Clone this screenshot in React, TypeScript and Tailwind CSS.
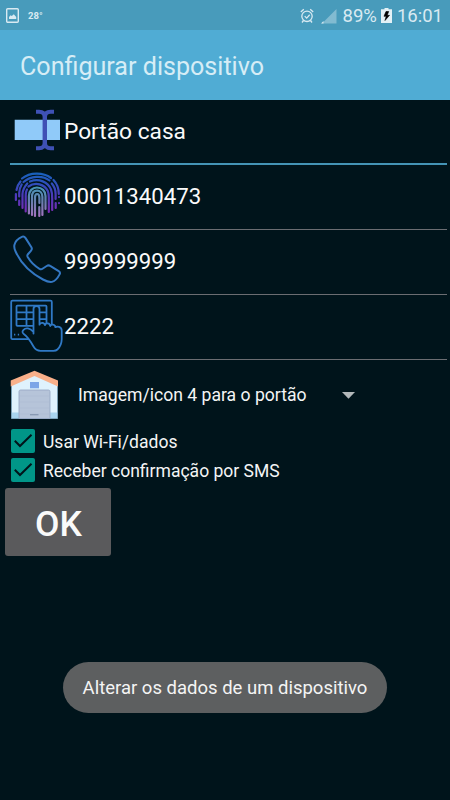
import { useState } from "react";

const RenameIcon = () => (
  <svg className="h-[65px] w-[54px] shrink-0" viewBox="0 0 54 65" fill="none">
    <path d="M4.7 19.7H50V40H4.7z" fill="#90caf9" />
    <path
      d="M26 11.800h3c3.800 0 5.600 2 5.600 5.200v26c0 3.200-1.800 5.200-5.600 5.200H26M44 11.800h-3.400c-3.800 0-5.600 2-5.600 5.200v26c0 3.200 1.800 5.200 5.600 5.200H44"
      stroke="#3f51b5"
      strokeWidth="4"
    />
  </svg>
);

const FingerprintIcon = () => (
  <svg className="h-[65px] w-[54px] shrink-0" viewBox="0 0 54 65" fill="none" strokeWidth="2.200" strokeLinecap="round">
    <defs>
      <linearGradient id="ridge" x1="0" y1="8" x2="0" y2="51" gradientUnits="userSpaceOnUse">
        <stop stopColor="#1762bd" />
        <stop offset="0.5" stopColor="#493bba" />
        <stop offset="1" stopColor="#8429b5" />
      </linearGradient>
      <linearGradient id="core" x1="0" y1="22" x2="0" y2="51" gradientUnits="userSpaceOnUse">
        <stop stopColor="#4694b5" />
        <stop offset="0.5" stopColor="#697eaf" />
        <stop offset="1" stopColor="#a273bf" />
      </linearGradient>
    </defs>
    <g stroke="url(#ridge)">
      <path d="M12 13.500C20 7 33 7 41 13M43.500 15c3.800 4 5.300 9 5.300 14M6.500 25c.6-3.500 1.800-6 4-8.500M5.900 29v6" />
      <path d="M13.500 17c7-6 19-7 26-1.500M41.800 18.500c2.600 3 3.800 6 3.800 10.500v5M9.200 31.500V28c0-3 1-6 2.500-8.500M9.200 35.500v4.500" />
      <path d="M20 16.500c9-3.500 18 .5 21 8 1.200 3 1.200 6 1.200 9V45M12.500 43V29c.2-4 2-7.300 4.800-10.500" />
      <path d="M18.500 21.500c7-5 16-2.200 19.300 4.500.9 2 1 5 1 7v14M15.700 46.500V30c0-2 .4-4 1.300-5.500" />
      <path d="M49 32v.1M45.700 38v5M49 38v.1" />
    </g>
    <g stroke="url(#core)">
      <path d="M18.900 48.500V31c0-5 3.500-8.500 8-8.500 5 0 8.600 3.500 8.600 8.500v13" />
      <path d="M22 50V32c0-4 2-6.300 5-6.300 3.300 0 5.400 2.500 5.400 6.300v18" />
      <path d="M25 51V33c0-2.600.6-4 2.100-4s2.300 1.400 2.300 4v5M29.300 42v9" />
    </g>
  </svg>
);

const PhoneIcon = () => (
  <svg className="h-[65px] w-[54px] shrink-0" viewBox="0 0 54 65" fill="none">
    <path
      d="M4.400 15c.8-3.600 4-6.700 8-8.400 1.300-.5 2.400.3 3.200 1.500l5.800 9.200c.8 1.300.6 2.300-.5 3.500l-3.200 3.700c-.6.800-.5 1.500 0 2.500 2.800 4.800 6.900 8.900 11.800 11.800 1.200.7 2 .7 3-.1l4.200-2.700c1.200-.8 2.300-.9 3.500-.1l8.500 5.200c1.300.8 1.600 2 .9 3.300-1.700 3.300-4.600 6.600-7.600 7.500-3 .7-6-.8-9-2.400C20.500 42.800 10.500 32.700 5.600 21.500 4.500 19.200 4 17 4.400 15z"
      stroke="#3377c2"
      strokeWidth="2"
    />
  </svg>
);

const KeypadIcon = () => (
  <svg className="h-[65px] w-[54px] shrink-0" viewBox="0 0 54 65" fill="none" stroke="#2f79c6" strokeWidth="1.800" strokeLinejoin="round">
    <rect x="1.200" y="5.700" width="40.600" height="38.400" rx="1.200" />
    <rect x="6.500" y="10.600" width="30" height="20.200" rx="0.800" />
    <path d="M16.500 10.600v20.200M27 10.600v20.200M6.500 17.300h30M6.500 24.100h30" />
    <path d="M4 39.700h1.300M7.800 39.700h1.300" />
    <path
      d="M23.500 38.500V14c0-4 6-4 6 0v15.700c.8-2.700 5-2.500 5.400.5.700-2.700 5-2.200 5.300.8.800-2.300 5-1.600 5.200 1.200 1.600-1.300 6.300-.5 6.300 3.500v8.500c0 4.500-2 8-4.300 10.300-.8.800-2 1.300-4 1.300H30.500c-3.200 0-5.500-1.700-7-4.300-2.500-4.500-5-9-9.700-12.500-1.600-1.300-1.800-2.600-.3-4.200 2.300-2.300 6.200-2 10 2.200z"
      fill="#00141b"
    />
  </svg>
);

const GarageIcon = () => (
  <svg className="h-[67px] w-[54px] shrink-0" viewBox="0 0 54 67">
    <path d="M1.500 24L24.500 13l23 11v34.500h-46z" fill="#dff2fd" />
    <path d="M1.500 52.500h46v6h-46z" fill="#a8d4ee" />
    <path d="M1.500 24v34.500h46V24" fill="none" stroke="#7ba3bd" strokeWidth="0.800" />
    <path d="M9 58.500V31.600c0-1 .6-1.600 1.600-1.600h27.800c1 0 1.600.6 1.600 1.600v26.900z" fill="#b6c4d9" stroke="#98a9c5" strokeWidth="0.900" />
    <path d="M10 36h29M10 42h29M10 48h29M10 54h29" stroke="#aebdd3" strokeWidth="0.600" />
    <path d="M20 54.700h8.500" stroke="#8798b3" strokeWidth="1.300" />
    <path d="M20 22h9v6.300h-9z" fill="#7ba5e7" />
    <path d="M.7 20.500L24.500 10.800 48 20.500v6L24.500 16 .7 26.500z" fill="#f9b08a" />
  </svg>
);

const Field = ({ icon: Icon, value, active }: any) => (
  <div className="relative flex h-[65px] items-center">
    <Icon />
    <input
      className={
        active
          ? "mb-[3px] h-10 min-w-0 flex-1 bg-transparent text-[22.700px] text-[#fafafa] outline-none"
          : "mb-[3px] h-10 min-w-0 flex-1 bg-transparent text-[22.200px] text-[#fafafa] outline-none"
      }
      defaultValue={value}
    />
    <span className={active ? "absolute bottom-0 left-0 h-[2px] w-full bg-[#4494b6]" : "absolute bottom-0 left-0 h-px w-full bg-[#6b6d72]"} />
  </div>
);

const CheckRow = ({ label }: { label: string }) => {
  const [checked, setChecked] = useState(true);
  return (
    <button className="flex h-[29px] items-center gap-2 text-left" onClick={() => setChecked(!checked)}>
      <svg className="mb-px size-6 shrink-0" viewBox="0 0 24 24">
        <rect width="24" height="24" rx="2" fill="#009688" />
        {checked && <path d="M3.800 11.800l5.200 5.200L20.500 5.800" fill="none" stroke="#00141b" strokeWidth="2" />}
      </svg>
      <span className="pt-[2px] text-[17.550px] text-[#f4f5f5]">{label}</span>
    </button>
  );
};

const StatusBar = () => (
  <div className="flex h-[30px] items-center bg-[#489bbb] text-[#d9eaf2]">
    <svg className="ml-[6px] mt-px h-[15px] w-[13px]" viewBox="0 0 13 15" fill="none">
      <rect x="0.700" y="0.700" width="11.600" height="13.600" rx="1" stroke="currentColor" strokeWidth="1.400" />
      <path d="M3 11V9l1.600-1.800 1.200.8 2-1.800L10.200 9v2z" fill="currentColor" />
    </svg>
    <span className="ml-[9px] pt-[3px] text-[9.500px] font-bold">28°</span>
    <div className="ml-auto flex items-center pr-[7px]">
      <svg className="mt-px h-4 w-[14px]" viewBox="0 0 14 16" fill="none" stroke="currentColor" strokeWidth="1.300">
        <circle cx="7" cy="8.300" r="5.200" />
        <path d="M.8 4l3-2.800M13.200 4l-3-2.800M3.500 12.500L2 14.500M10.500 12.500l1.500 2M4.700 8.100l2 2 3-3.300" />
      </svg>
      <svg className="ml-[7px] mt-px h-4 w-4" viewBox="0 0 16 16" fill="currentColor">
        <path d="M1 15.500L15.500 1v14.500z" opacity="0.400" />
        <path d="M0 15.500l2.500-2.500v2.500z" />
      </svg>
      <span className="ml-[6px] pt-[3px] text-[18.500px]">89%</span>
      <svg className="ml-1 mt-px h-[15px] w-[11px]" viewBox="0 0 11 15">
        <path d="M3.500 0h4v1.300H11V15H0V1.300h3.500z" fill="#e3f1f6" />
        <path d="M5 3.500L3 8.300h2.200L4 12.500l4.500-5.200H6.200l1.500-3.800z" fill="#000" stroke="#000" strokeWidth="0.600" />
      </svg>
      <span className="ml-[5px] pt-[3px] text-[18.500px]">16:01</span>
    </div>
  </div>
);

const App = () => (
  <div className="flex h-[800px] w-[450px] flex-col overflow-hidden bg-[#00141b] font-['Roboto',sans-serif]">
    <StatusBar />
    <header className="flex h-[70px] items-center bg-[#50acd4] pl-5">
      <h1 className="pt-[3px] text-[25.100px] text-[#d6edf6]">Configurar dispositivo</h1>
    </header>

    <main className="flex flex-1 flex-col">
      <div className="pr-[3px] pl-[10px]">
        <Field icon={RenameIcon} value="Portão casa" active />
        <Field icon={FingerprintIcon} value="00011340473" />
        <Field icon={PhoneIcon} value="999999999" />
        <Field icon={KeypadIcon} value="2222" />
      </div>

      <div className="flex h-[67px] items-center pl-[10px]">
        <GarageIcon />
        <div className="ml-[14px] flex w-[277px] items-center justify-between pt-1">
          <span className="text-[17.600px] text-[#f4f5f5]">Imagem/icon 4 para o portão</span>
          <svg className="h-[7px] w-[13px]" viewBox="0 0 13 7">
            <path d="M0 0h13L6.500 6.800z" fill="#b2b8ba" />
          </svg>
        </div>
      </div>

      <div className="flex flex-col pl-[11px]">
        <CheckRow label="Usar Wi-Fi/dados" />
        <CheckRow label="Receber confirmação por SMS" />
      </div>

      <button className="mt-[3px] ml-[5px] h-[68px] w-[106px] rounded-[3px] bg-[#5a5a5c] pt-[6px] pl-px text-[35.500px] font-medium text-[#fafafa]">
        OK
      </button>

      {/* Toast */}
      <div className="mt-auto mb-[87px] flex h-[51px] w-[324px] items-center justify-center self-center rounded-full bg-[#5d5f60] pt-[2px] text-[18.500px] text-[#f4f4f4]">
        Alterar os dados de um dispositivo
      </div>
    </main>
  </div>
);

export default App;
